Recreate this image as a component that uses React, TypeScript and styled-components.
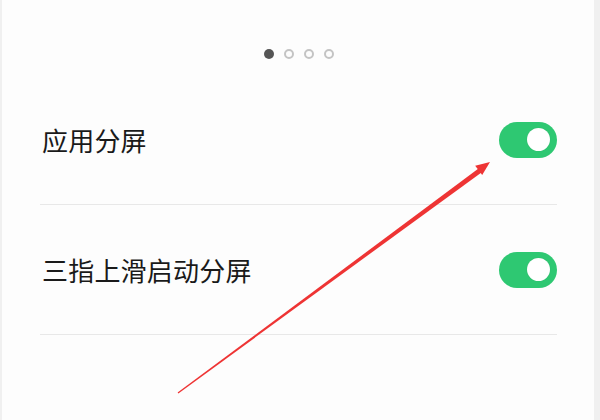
import styled, { createGlobalStyle } from "styled-components";
import { FC } from "react";

const GlobalStyle = createGlobalStyle`
  html, body {
    margin: 0;
    padding: 0;
    background: #fdfdfd;
  }
`;

const Screen = styled.div`
  position: relative;
  box-sizing: border-box;
  width: 600px;
  height: 420px;
  overflow: hidden;
  background: #fdfdfd;
  border-left: 2px solid #f0f0f0;
  border-right: 6px solid #f0f0f0;
  font-family: "Noto Sans CJK SC", "Noto Sans", sans-serif;
`;

const Pager = styled.div`
  display: flex;
  justify-content: center;
  gap: 10px;
  height: 75px;
  box-sizing: border-box;
  padding-top: 49px;
  padding-left: 1px;
`;

const Dot = styled.span<{ $active?: boolean }>`
  box-sizing: border-box;
  width: 10px;
  height: 10px;
  border-radius: 50%;
  background: ${(p) => (p.$active ? "#555" : "transparent")};
  border: ${(p) => (p.$active ? "none" : "2px solid #c4c4c4")};
`;

const List = styled.div`
  margin: 0 37px 0 38px;
`;

const Row = styled.div`
  display: flex;
  align-items: center;
  justify-content: space-between;
  height: 129px;
  padding-left: 2px;
  border-bottom: 1px solid #e8e8e8;
`;

const Label = styled.span`
  font-size: 26px;
  font-weight: 400;
  color: #1a1a1a;
  letter-spacing: 0.2px;
`;

const Switch = styled.div<{ $on?: boolean }>`
  position: relative;
  width: 58px;
  height: 36px;
  border-radius: 18px;
  background: ${(p) => (p.$on ? "#2ec872" : "#ddd")};

  &::after {
    content: "";
    position: absolute;
    top: 6px;
    right: 7px;
    width: 23px;
    height: 23px;
    border-radius: 50%;
    background: #fff;
    box-shadow: 0 0 1px rgba(0, 0, 0, 0.15);
  }
`;

const Overlay = styled.svg`
  position: absolute;
  left: -2px;
  top: 0;
  pointer-events: none;
`;

const SettingRow: FC<{ label: string; on?: boolean }> = ({ label, on }) => (
  <Row>
    <Label>{label}</Label>
    <Switch $on={on} />
  </Row>
);

const App: FC = () => {
  return (
    <>
      <GlobalStyle />
      <Screen>
        <Pager>
          <Dot $active />
          <Dot />
          <Dot />
          <Dot />
        </Pager>
        <List>
          <SettingRow label="应用分屏" on />
          <SettingRow label="三指上滑启动分屏" on />
        </List>
        <Overlay width="600" height="420" viewBox="0 0 600 420">
          <polygon
            points="177.6,392.5 178.4,393.5 481.5,172.4 478.5,168.6"
            fill="#ee3434"
          />
          <polygon points="490,162 482.2,174.9 475.2,165.7" fill="#ee3434" />
        </Overlay>
      </Screen>
    </>
  );
};

export default App;
